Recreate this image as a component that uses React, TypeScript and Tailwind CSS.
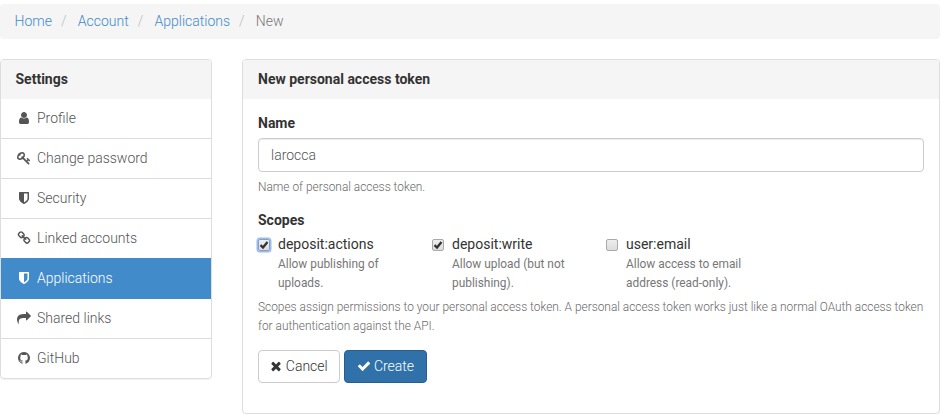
import React from "react";

const ICONS = {
  user: "M1536 1399q0 109-62.5 187t-150.5 78h-854q-88 0-150.5-78t-62.5-187q0-85 8.5-160.5t31.5-152 58.5-131 94-89 134.5-34.5q131 128 313 128t313-128q76 0 134.5 34.5t94 89 58.5 131 31.5 152 8.5 160.5zm-256-887q0 159-112.5 271.5t-271.5 112.5-271.5-112.5-112.5-271.5 112.5-271.5 271.5-112.5 271.5 112.5 112.5 271.5z",
  key: "M832 512q0-80-56-136t-136-56-136 56-56 136q0 42 19 83-41-19-83-19-80 0-136 56t-56 136 56 136 136 56 136-56 56-136q0-42-19-83 41 19 83 19 80 0 136-56t56-136zm851 704q0 17-49 66t-66 49q-9 0-28.5-16t-36.5-33-38.5-40-24.5-26l-96 96 220 220q28 28 28 68 0 42-39 81t-81 39q-40 0-68-28l-671-671q-176 131-365 131-163 0-265.5-102.5t-102.5-265.5q0-160 95-313t248-248 313-95q163 0 265.5 102.5t102.5 265.5q0 189-131 365l355 355 96-96q-3-3-26-24.5t-40-38.5-33-36.5-16-28.5q0-17 49-66t66-49q13 0 23 10 6 6 46 44.5t82 79.5 86.5 86 73 78 28.5 41z",
  shield: "M1344 960v-640h-448v1137q119-63 213-137 235-184 235-360zm192-768v768q0 86-33.5 170.5t-83 150-118 127.5-126.5 103-121 77.5-89.5 49.5-42.5 20q-12 6-26 6t-26-6q-16-7-42.5-20t-89.5-49.5-121-77.5-126.5-103-118-127.5-83-150-33.5-170.5v-768q0-26 19-45t45-19h1152q26 0 45 19t19 45z",
  link: "M1520 1216q0-40-28-68l-208-208q-28-28-68-28-42 0-72 32 3 3 19 18.5t21.5 21.5 15 19 13 25.5 3.5 27.5q0 40-28 68t-68 28q-15 0-27.5-3.5t-25.5-13-19-15-21.5-21.5-18.5-19q-33 31-33 73 0 40 28 68l206 207q27 27 68 27 40 0 68-26l147-146q28-28 28-67zm-703-705q0-40-28-68l-206-207q-28-28-68-28-39 0-68 27l-147 146q-28 28-28 67 0 40 28 68l208 208q27 27 68 27 42 0 72-31-3-3-19-18.5t-21.5-21.5-15-19-13-25.5-3.5-27.5q0-40 28-68t68-28q15 0 27.5 3.5t25.5 13 19 15 21.5 21.5 18.5 19q33-31 33-73zm895 705q0 120-85 203l-147 146q-83 83-203 83-121 0-204-85l-206-207q-83-83-83-203 0-123 88-209l-88-88q-86 88-208 88-120 0-204-84l-208-208q-84-84-84-204t85-203l147-146q83-83 203-83 121 0 204 85l206 207q83 83 83 203 0 123-88 209l88 88q86-88 208-88 120 0 204 84l208 208q84 84 84 204z",
  share: "M1792 640q0 26-19 45l-512 512q-19 19-45 19t-45-19-19-45v-256h-224q-98 0-175.5 6t-154 21.5-133 42.5-105.5 69.5-80 101-48.5 138.5-17.5 181q0 55 5 123 0 6 2.5 23.5t2.5 26.5q0 15-8.5 25t-23.5 10q-16 0-28-17-7-9-13-22t-13.5-30-10.5-24q-127-285-127-451 0-199 53-333 162-403 875-403h224v-256q0-26 19-45t45-19 45 19l512 512q19 19 19 45z",
  github: "M896 128q209 0 385.5 103t279.5 279.5 103 385.5q0 251-146.5 451.5t-378.5 277.5q-27 5-40-7t-13-30q0-3 .5-76.5t.5-134.5q0-97-52-142 57-6 102.5-18t94-39 81-66.5 53-105 20.5-150.5q0-119-79-206 37-91-8-204-28-9-81 11t-92 44l-38 24q-93-26-192-26t-192 26q-16-11-42.5-27t-83.5-38.5-85-13.5q-45 113-8 204-79 87-79 206 0 85 20.5 150t52.5 105 80.5 67 94 39 102.5 18q-39 36-49 103-21 10-45 15t-57 5-65.5-21.5-55.5-62.5q-19-32-48.5-52t-49.5-24l-20-3q-21 0-29 4.5t-5 11.5 9 14 13 12l7 5q22 10 43.5 38t31.5 51l10 23q13 38 44 61.5t67 30 69.5 7 55.5-3.5l23-4q0 38 .5 88.5t.5 54.5q0 18-13 30t-40 7q-232-77-378.5-277.5t-146.5-451.5q0-209 103-385.5t279.5-279.5 385.5-103z",
  times: "M1490 1322q0 40-28 68l-136 136q-28 28-68 28t-68-28l-294-294-294 294q-28 28-68 28t-68-28l-136-136q-28-28-28-68t28-68l294-294-294-294q-28-28-28-68t28-68l136-136q28-28 68-28t68 28l294 294 294-294q28-28 68-28t68 28l136 136q28 28 28 68t-28 68l-294 294 294 294q28 28 28 68z",
  check: "M1671 566q0 40-28 68l-724 724-136 136q-28 28-68 28t-68-28l-136-136-362-362q-28-28-28-68t28-68l136-136q28-28 68-28t68 28l294 295 656-657q28-28 68-28t68 28l136 136q28 28 28 68z",
};

type IconName = keyof typeof ICONS;

function Icon({ name, className = "" }: { name: IconName; className?: string }) {
  return (
    <svg viewBox="0 0 1792 1792" fill="currentColor" aria-hidden="true" className={`size-3.5 shrink-0 ${className}`}>
      <path d={ICONS[name]} />
    </svg>
  );
}

const crumbs = ["Home", "Account", "Applications"];

const menu: { label: string; icon: IconName; active?: boolean }[] = [
  { label: "Profile", icon: "user" },
  { label: "Change password", icon: "key" },
  { label: "Security", icon: "shield" },
  { label: "Linked accounts", icon: "link" },
  { label: "Applications", icon: "shield", active: true },
  { label: "Shared links", icon: "share" },
  { label: "GitHub", icon: "github" },
];

const scopes = [
  { name: "deposit:actions", text: "Allow publishing of uploads.", checked: true, focused: true },
  { name: "deposit:write", text: "Allow upload (but not publishing).", checked: true, focused: false },
  { name: "user:email", text: "Allow access to email address (read-only).", checked: false, focused: false },
];

function Checkbox({ checked, focused }: { checked: boolean; focused: boolean }) {
  return (
    <span
      role="checkbox"
      aria-checked={checked}
      className={`mt-[5px] flex size-3 shrink-0 items-center justify-center rounded-[2px] border bg-linear-to-b from-[#eeeeee] to-[#dcdcdc] ${
        focused ? "border-[#8f9db5] shadow-[0_0_0_1.5px_#96bbf5]" : "border-[#a9a9a9]"
      }`}
    >
      {checked && (
        <svg viewBox="0 0 10 10" className="size-2.5 shrink-0" fill="none" stroke="#333" strokeWidth="2.3">
          <path d="M1.5 5.2 L4 7.5 L8.5 2" />
        </svg>
      )}
    </span>
  );
}

export default function App() {
  return (
    <div className="w-[940px] pt-1 font-[Roboto,sans-serif] text-sm leading-5 font-light text-[#333]">
      <nav className="flex h-[35px] items-center rounded bg-[#f5f5f5] px-[14.5px] pb-px">
        {crumbs.map((c) => (
          <React.Fragment key={c}>
            <a className="text-[#428bca]">{c}</a>
            <span className="w-[25.8px] pl-[9px] text-[#bbb]">/</span>
          </React.Fragment>
        ))}
        <span className="text-[#777]">New</span>
      </nav>

      <div className="mt-5 flex items-start gap-[30px]">
        <aside className="w-[212px] overflow-hidden rounded border border-[#ddd] shadow-[0_1px_1px_rgba(0,0,0,0.05)]">
          <h2 className="flex h-[39px] items-center bg-[#f5f5f5] pb-0.5 pl-[14.5px] font-bold">Settings</h2>
          <ul className="divide-y divide-[#ddd]">
            {menu.map((m) => (
              <li
                key={m.label}
                className={`flex items-center px-[15px] ${
                  m.active
                    ? "-mt-px h-[41px] border-[#428bca] bg-[#428bca] text-white"
                    : "h-10 pb-0.5 text-[#555] last:h-[39px] last:pb-px"
                }`}
              >
                <span className="mr-[3px] flex w-[17px] justify-center pr-px pl-0 box-content">
                  <Icon name={m.icon} className="-ml-px" />
                </span>
                {m.label}
              </li>
            ))}
          </ul>
        </aside>

        <main className="h-[355px] w-[698px] overflow-hidden rounded border border-[#ddd] shadow-[0_1px_1px_rgba(0,0,0,0.05)]">
          <h2 className="flex h-[39px] items-center bg-[#f5f5f5] px-[15px] pb-0.5 font-bold">New personal access token</h2>
          <div className="px-[15px] pt-3.5">
            <label className="block font-bold">Name</label>
            <div className="mt-[5px] flex h-[34px] items-center rounded border border-[#ccc] px-3 text-[#555] shadow-[inset_0_1px_1px_rgba(0,0,0,0.075)]">
              larocca
            </div>
            <p className="mt-[5px] text-[11.9px] text-[#696969]">Name of personal access token.</p>

            <h3 className="mt-[13px] font-bold">Scopes</h3>
            <div className="mt-1 flex">
              {scopes.map((s) => (
                <div key={s.name} className="flex w-[174px] gap-2">
                  <Checkbox checked={s.checked} focused={s.focused} />
                  <div className="font-normal">
                    <div>{s.name}</div>
                    <p className="mt-px w-[125px] text-[11.9px] leading-[19px] text-[#777]">{s.text}</p>
                  </div>
                </div>
              ))}
            </div>
            <p className="mt-[5px] text-[11.9px] leading-[19px] text-[#696969]">
              Scopes assign permissions to your personal access token. A personal access token works just like a normal OAuth access token for authentication against the API.
            </p>
            <div className="mt-3.5 flex gap-1">
              <button className="flex h-[33px] w-[82px] items-center justify-center gap-[3px] rounded border border-[#ccc] bg-white pb-px">
                <Icon name="times" className="-ml-[1.5px]" />
                Cancel
              </button>
              <button className="flex h-[33px] w-[83px] items-center justify-center gap-[3px] rounded border border-[#285e8e] bg-[#3071a9] pb-px text-white">
                <Icon name="check" />
                Create
              </button>
            </div>
          </div>
        </main>
      </div>
    </div>
  );
}
